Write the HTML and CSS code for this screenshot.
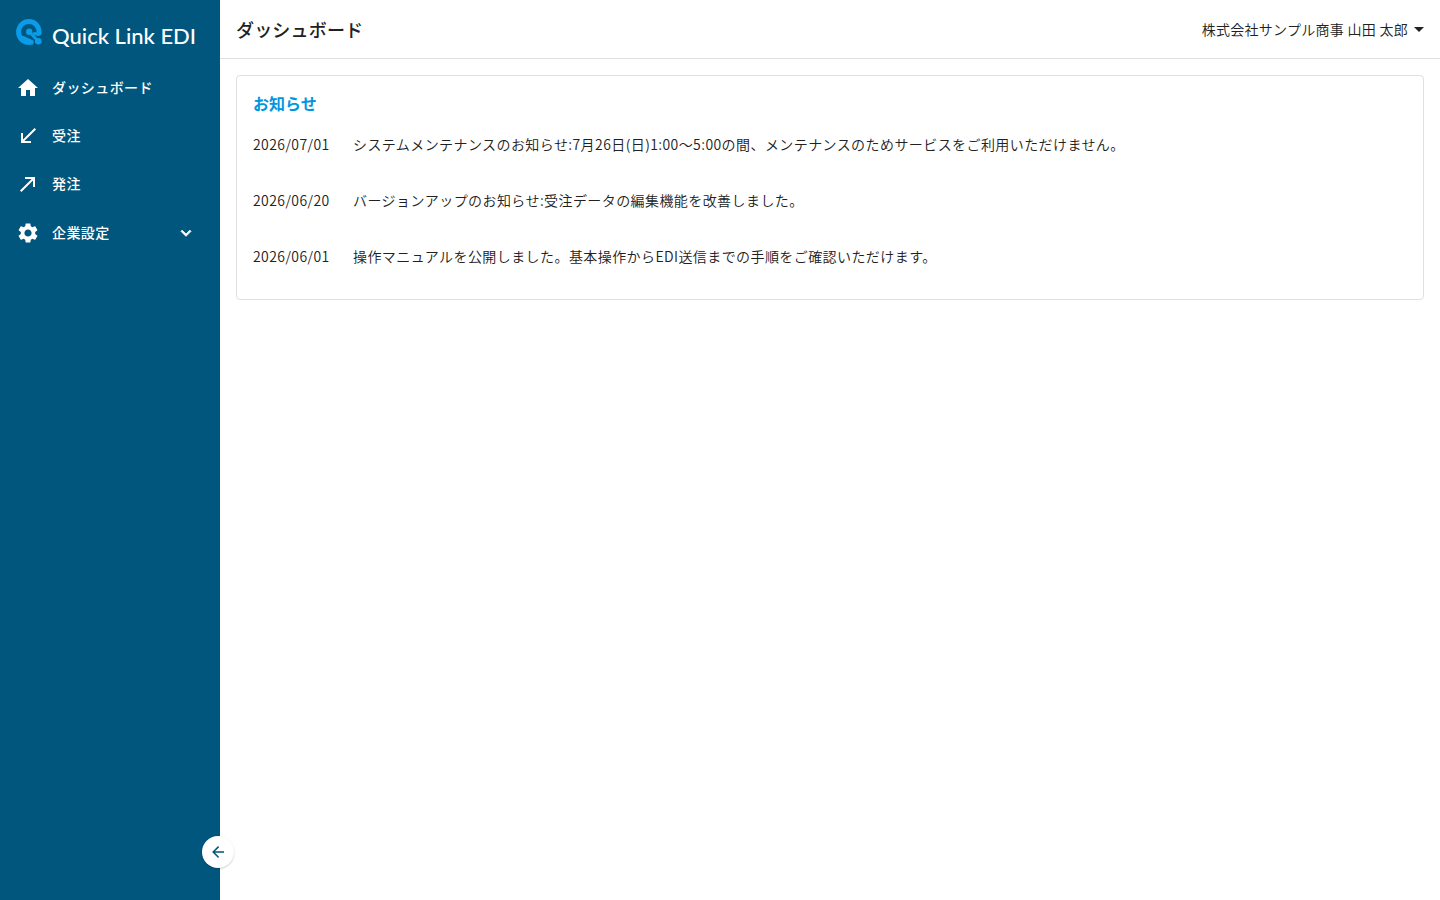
FILE: index.html
```
<!DOCTYPE html>
<html lang="ja">
<head>
    <meta charset="UTF-8">
    <meta name="viewport" content="width=device-width, initial-scale=1.0">
    <title>ダッシュボード | Quick Link EDI</title>
    <link rel="stylesheet" href="styles.css">
</head>
<body>
    <aside class="sidebar">
        <a class="logo" href="#">
            <svg class="logo-mark" viewBox="0 0 26 26" aria-hidden="true">
                <path class="mark-ring" d="M23 14.200C23.600 7.500 19 2.600 12.800 2.600C7 2.600 2.600 7.200 2.600 13C2.600 19 7 23.200 13 23.200H15.200"/>
                <path class="mark-fill" d="M4 16L9 17.500C11 19.300 14 19 17 22L14 25.600H9z"/>
                <path class="mark-link" d="M13.200 12.800L22 22"/>
                <path class="mark-link" d="M18.500 14.500L22 15.500"/>
                <circle class="mark-fill" cx="13.200" cy="12.800" r="3.200"/>
                <circle class="mark-fill" cx="22.300" cy="22.300" r="3.300"/>
            </svg>
            <span class="logo-text">Quick Link EDI</span>
        </a>
        <nav class="menu">
            <a class="menu-item" href="#">
                <svg class="icon" viewBox="0 0 24 24" aria-hidden="true"><path d="M10 20v-6h4v6h5v-8h3L12 3 2 12h3v8z"/></svg>
                <span class="menu-label">ダッシュボード</span>
            </a>
            <a class="menu-item" href="#">
                <svg class="icon" viewBox="0 0 24 24" aria-hidden="true"><path d="M20 5.410 18.590 4 7 15.590V9H5v10h10v-2H8.410z"/></svg>
                <span class="menu-label">受注</span>
            </a>
            <a class="menu-item" href="#">
                <svg class="icon" viewBox="0 0 24 24" aria-hidden="true"><path d="M9 5v2h6.590L4 18.590 5.410 20 17 8.410V15h2V5z"/></svg>
                <span class="menu-label">発注</span>
            </a>
            <button class="menu-item" type="button" aria-expanded="false">
                <svg class="icon" viewBox="0 0 24 24" aria-hidden="true"><path d="M19.140 12.940c.04-.3.06-.61.06-.94 0-.32-.02-.64-.07-.94l2.030-1.580c.18-.14.23-.41.12-.61l-1.920-3.320c-.12-.22-.37-.29-.59-.22l-2.390.96c-.5-.38-1.030-.7-1.620-.94l-.36-2.540c-.04-.24-.24-.41-.48-.41h-3.840c-.24 0-.43.17-.47.41l-.36 2.540c-.59.24-1.130.57-1.620.94l-2.390-.96c-.22-.08-.47 0-.59.22L2.740 8.870c-.12.21-.08.47.12.61l2.030 1.580c-.05.3-.09.63-.09.94s.02.64.07.94l-2.030 1.580c-.18.14-.23.41-.12.61l1.920 3.320c.12.22.37.29.59.22l2.390-.96c.5.38 1.030.7 1.620.94l.36 2.540c.05.24.24.41.48.41h3.840c.24 0 .44-.17.47-.41l.36-2.540c.59-.24 1.130-.56 1.620-.94l2.390.96c.22.08.47 0 .59-.22l1.920-3.320c.12-.22.07-.47-.12-.61zM12 15.600c-1.980 0-3.600-1.620-3.600-3.600s1.620-3.600 3.600-3.600 3.600 1.620 3.600 3.600-1.620 3.600-3.600 3.600"/></svg>
                <span class="menu-label">企業設定</span>
                <svg class="chevron" viewBox="0 0 24 24" aria-hidden="true"><path d="M7.410 8.580 12 13.170l4.590-4.590L18 10l-6 6-6-6z"/></svg>
            </button>
        </nav>
        <button class="collapse-btn" type="button" aria-label="メニューを閉じる">
            <svg viewBox="0 0 24 24" aria-hidden="true"><path d="M20 11v2H8l5.500 5.500-1.420 1.420L4.160 12l7.920-7.920L13.500 5.500 8 11z"/></svg>
        </button>
    </aside>

    <div class="page">
        <header class="topbar">
            <h1>ダッシュボード</h1>
            <button class="user-menu" type="button" aria-haspopup="true">
                <span>株式会社サンプル商事 山田 太郎</span>
                <svg viewBox="0 0 10 5" aria-hidden="true"><path d="M0 0h10L5 5z"/></svg>
            </button>
        </header>
        <main class="content">
            <section class="news">
                <h2>お知らせ</h2>
                <ul class="news-list">
                    <li>
                        <time datetime="2026-07-01">2026/07/01</time>
                        <p>システムメンテナンスのお知らせ:7月26日(日)1:00〜5:00の間、メンテナンスのためサービスをご利用いただけません。</p>
                    </li>
                    <li>
                        <time datetime="2026-06-20">2026/06/20</time>
                        <p>バージョンアップのお知らせ:受注データの編集機能を改善しました。</p>
                    </li>
                    <li>
                        <time datetime="2026-06-01">2026/06/01</time>
                        <p>操作マニュアルを公開しました。基本操作からEDI送信までの手順をご確認いただけます。</p>
                    </li>
                </ul>
            </section>
        </main>
    </div>
</body>
</html>
```
FILE: styles.css
```
:root {
    --navy: #00567d;
    --blue: #0097e0;
    --text: #212121;
    --border: #e0e0e0;
}

* {
    margin: 0;
    padding: 0;
    box-sizing: border-box;
}

body {
    display: flex;
    min-height: 100vh;
    background: #fff;
    color: var(--text);
    font-family: "Noto Sans CJK JP", sans-serif;
    font-size: 14px;
    font-weight: 350;
    line-height: 20px;
}

button {
    border: none;
    background: none;
    color: inherit;
    font: inherit;
    cursor: pointer;
}

a {
    color: inherit;
    text-decoration: none;
}

svg {
    display: block;
    fill: currentColor;
}

/* sidebar */
.sidebar {
    position: sticky;
    top: 0;
    flex: none;
    width: 220px;
    height: 100vh;
    background: var(--navy);
    color: #fff;
}

.logo {
    display: flex;
    align-items: center;
    gap: 10px;
    height: 64px;
    padding: 0 16px;
}

.logo-mark {
    width: 26px;
    height: 26px;
    color: #0a9ce8;
}

.mark-ring,
.mark-link {
    fill: none;
    stroke: currentColor;
    stroke-linecap: round;
}

.mark-ring {
    stroke-width: 5;
}

.mark-link {
    stroke-width: 3;
}

.logo-text {
    padding-top: 8px;
    font-family: Lato, sans-serif;
    font-size: 22px;
    font-weight: 500;
    white-space: nowrap;
}

.menu-item {
    display: flex;
    align-items: center;
    gap: 12px;
    width: 100%;
    height: 48px;
    padding: 0 24px 0 16px;
    font-weight: 500;
    letter-spacing: 0.03em;
}

button.menu-item {
    height: 50px;
}

.menu-label {
    padding-bottom: 2px;
}

.icon {
    width: 24px;
    height: 24px;
}

.chevron {
    width: 20px;
    height: 20px;
    margin-left: auto;
    stroke: currentColor;
}

.collapse-btn {
    position: absolute;
    right: -14px;
    bottom: 32px;
    display: flex;
    align-items: center;
    justify-content: center;
    width: 32px;
    height: 32px;
    border-radius: 50%;
    background: #fff;
    color: var(--navy);
    box-shadow: 0 1px 2px rgba(0, 0, 0, 0.2);
}

.collapse-btn svg {
    width: 18px;
    height: 18px;
}

/* page */
.page {
    flex: 1;
    min-width: 0;
}

.topbar {
    display: flex;
    align-items: center;
    justify-content: space-between;
    height: 59px;
    padding: 0 16px;
    border-bottom: 1px solid var(--border);
}

.topbar h1 {
    font-size: 18px;
    font-weight: 500;
    letter-spacing: 0.01em;
}

.user-menu {
    display: flex;
    align-items: center;
    gap: 6px;
    letter-spacing: 0.02em;
}

.user-menu svg {
    width: 10px;
    height: 5px;
}

.content {
    padding: 16px;
}

.news {
    padding: 16px 16px 15px;
    border: 1px solid var(--border);
    border-radius: 4px;
}

.news h2 {
    color: var(--blue);
    font-size: 16px;
    font-weight: 700;
    line-height: 22px;
}

.news-list {
    padding-top: 2px;
    list-style: none;
}

.news-list li {
    display: flex;
    min-height: 56px;
    padding-top: 18px;
    letter-spacing: 0.03em;
}

.news-list time {
    flex: none;
    width: 100px;
}
```
